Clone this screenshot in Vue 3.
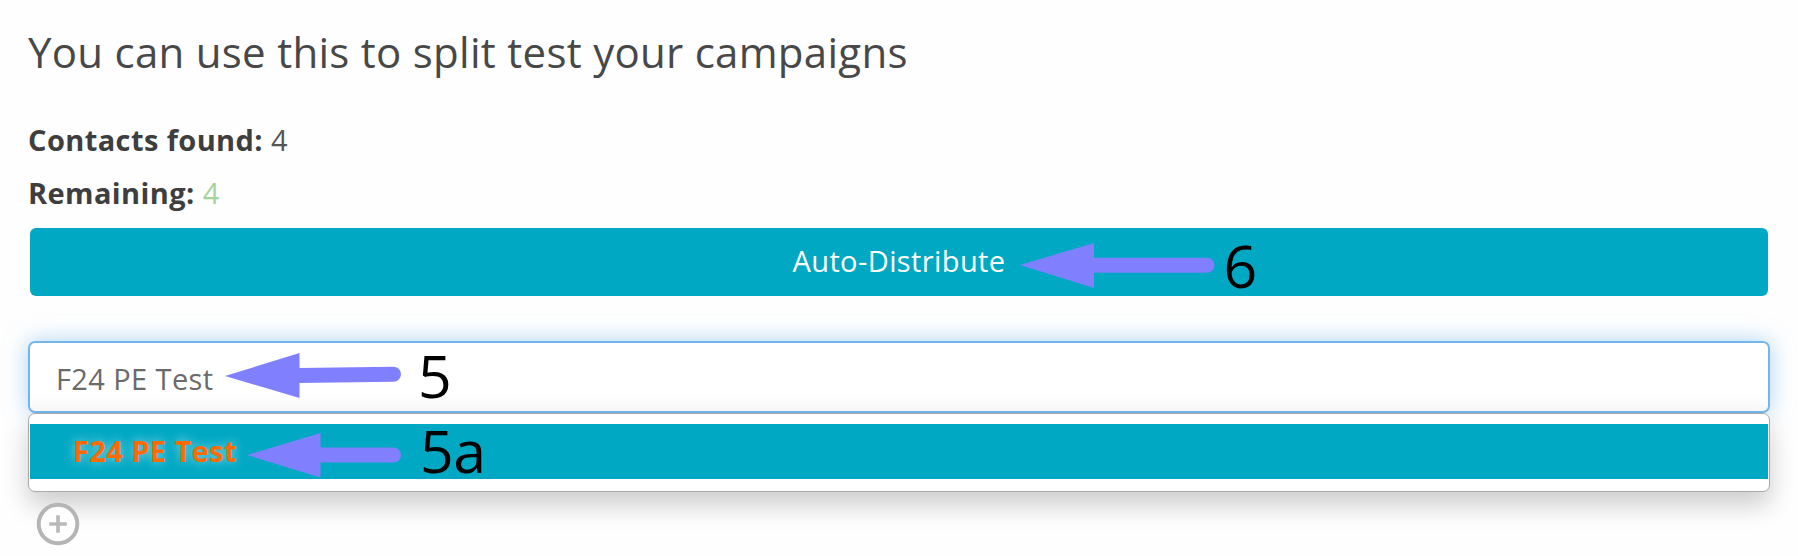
<template>
  <div class="split-wrapper">
    <h3 class="split-title">You can use this to split test your campaigns</h3>

    <div class="meta-list">
      <div class="meta-row"><b>Contacts found:</b> <span class="found">{{ found }}</span></div>
      <div class="meta-row"><b>Remaining:</b> <span class="remaining">{{ found }}</span></div>
    </div>

    <button type="button" class="distribute-btn"><span>Auto-Distribute</span></button>

    <div class="campaign-select">
      <input v-model="keyword" type="text" class="campaign-input" />
      <ul class="campaign-menu">
        <li v-for="item in campaigns" :key="item" class="campaign-item">
          <strong>{{ item }}</strong>
        </li>
      </ul>
    </div>

    <button type="button" class="add-btn" aria-label="add">
      <svg width="44" height="44" viewBox="0 0 44 44">
        <circle cx="22" cy="22" r="19.3" />
        <path d="M22 13.2V30.8M13.2 22H30.8" />
      </svg>
    </button>

    <!-- step markers over the form -->
    <svg class="steps" width="1798" height="556" viewBox="0 0 1798 556">
      <g v-for="step in steps" :key="step.label">
        <path class="arrow-head" :d="step.head" />
        <path class="arrow-line" :d="step.line" />
        <text :x="step.x" :y="step.y">{{ step.label }}</text>
      </g>
    </svg>
  </div>
</template>

<script setup>
import { ref } from 'vue';

const found = ref(4);
const keyword = ref('F24 PE Test');
const campaigns = ['F24 PE Test'];

const steps = [
  { label: '6', x: 1223.5, y: 287.5, head: 'M1020 265L1094 243V288Z', line: 'M1092 265.3H1207' },
  { label: '5', x: 418, y: 398.3, head: 'M225 376L299.5 353V398Z', line: 'M298 375.4L393.5 374.2' },
  { label: '5a', x: 420, y: 473, head: 'M247 455L320.5 433V477.5Z', line: 'M319 455H393.5' },
];
</script>

<style>
body {
  margin: 0;
  background: #fefefe;
}
</style>

<style scoped>
.split-wrapper {
  position: relative;
  height: 556px;
  padding: 24px 28px 0;
  box-sizing: border-box;
  overflow: hidden;
  background: #fefefe;
  color: #3e3e3e;
  font-family: "Open Sans", "Noto Sans", sans-serif;
  font-size: 29px;
  letter-spacing: 0.4px;
}

.split-title {
  margin: 0;
  line-height: 56px;
  font-size: 42px;
  font-weight: 400;
  letter-spacing: 0.28px;
  white-space: nowrap;
  color: #484848;
}

.meta-list {
  margin-top: 33px;
}

.meta-row {
  line-height: 53px;
}

.found {
  color: #555;
}

.remaining {
  color: #a3d39c;
}

.distribute-btn {
  display: flex;
  align-items: center;
  justify-content: center;
  width: 1738px;
  height: 68px;
  margin: 9px 0 0 2px;
  padding: 0 0 3px;
  border: none;
  border-radius: 6px;
  background: #00a8c4;
  color: #fff;
  font: inherit;
  letter-spacing: inherit;
}

.campaign-select {
  margin-top: 45px;
}

.campaign-input {
  display: block;
  width: 1742px;
  height: 72px;
  padding: 2px 26px 0;
  box-sizing: border-box;
  border: 2px solid #74b6ec;
  border-radius: 7px;
  outline: none;
  background: linear-gradient(#fff 70%, #fafafa);
  box-shadow: 0 0 22px rgba(102, 175, 233, 0.55);
  color: #6a6a6a;
  font: inherit;
  letter-spacing: inherit;
}

.campaign-menu {
  width: 1742px;
  height: 79px;
  margin: 0;
  padding: 10px 0;
  box-sizing: border-box;
  border: 1px solid #a9a9a9;
  border-radius: 7px;
  background: #fff;
  box-shadow: 0 13px 26px rgba(0, 0, 0, 0.2);
  list-style: none;
}

.campaign-item {
  height: 55px;
  margin: 0 1px;
  padding-left: 43px;
  line-height: 53px;
  background: #00a8c4;
  color: #ff6a00;
  text-shadow: 0 0 11px rgba(255, 255, 255, 0.6);
}

.add-btn {
  position: relative;
  display: flex;
  margin: 10px 0 0 7.5px;
  padding: 0;
  border: none;
  background: none;
}

.add-btn circle {
  fill: #fefefe;
  stroke: #b5b5b5;
  stroke-width: 4;
}

.add-btn path {
  fill: none;
  stroke: #b9b9b9;
  stroke-width: 3.6;
}

.steps {
  position: absolute;
  top: 0;
  left: 0;
  pointer-events: none;
}

.arrow-head {
  fill: #8080ff;
}

.arrow-line {
  fill: none;
  stroke: #8080ff;
  stroke-width: 15;
  stroke-linecap: round;
}

.steps text {
  fill: #000;
  font-size: 59px;
  letter-spacing: -0.5px;
}
</style>
